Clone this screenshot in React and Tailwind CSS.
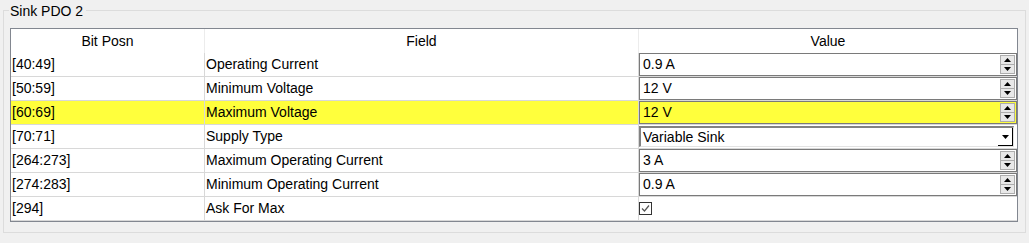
const rows = [
  { bits: '[40:49]', field: 'Operating Current', value: '0.9 A', kind: 'spin' },
  { bits: '[50:59]', field: 'Minimum Voltage', value: '12 V', kind: 'spin' },
  { bits: '[60:69]', field: 'Maximum Voltage', value: '12 V', kind: 'spin', highlight: true },
  { bits: '[70:71]', field: 'Supply Type', value: 'Variable Sink', kind: 'combo' },
  { bits: '[264:273]', field: 'Maximum Operating Current', value: '3 A', kind: 'spin' },
  { bits: '[274:283]', field: 'Minimum Operating Current', value: '0.9 A', kind: 'spin' },
  { bits: '[294]', field: 'Ask For Max', value: true, kind: 'check' }
]

const SpinBox = ({ value, highlight }) => (
  <div className={`relative flex items-center h-full border border-[#7a7a7a] pl-[3px] ${highlight ? 'bg-[#ffff3c]' : 'bg-white'}`}>
    <span>{value}</span>
    {/* up / down buttons */}
    <div className="absolute right-[1px] top-[1px] bottom-[1px] w-[15px] flex flex-col">
      <div className="flex-1 flex items-center justify-center bg-[#e8e8e8] border border-[#adadad]">
        <svg width="7" height="4" viewBox="0 0 7 4"><path d="M3.5 0 L7 4 L0 4 Z" fill="#000" /></svg>
      </div>
      <div className="flex-1 flex items-center justify-center bg-[#e8e8e8] border border-t-0 border-[#adadad]">
        <svg width="7" height="4" viewBox="0 0 7 4"><path d="M0 0 L7 0 L3.5 4 Z" fill="#000" /></svg>
      </div>
    </div>
  </div>
)

const ComboBox = ({ value }) => (
  <div className="relative flex items-center h-[21px] mt-[1px] mr-[3px] bg-white border-t-2 border-l-2 border-t-[#828282] border-l-[#828282] border-b border-r border-b-[#e3e3e3] border-r-[#e3e3e3] pl-[2px]">
    <span>{value}</span>
    <div className="absolute right-0 top-0 bottom-0 w-[15px] flex items-center justify-center border-r border-b border-black bg-white">
      <svg width="7" height="4" viewBox="0 0 7 4"><path d="M0 0 L7 0 L3.5 4 Z" fill="#000" /></svg>
    </div>
  </div>
)

const CheckBox = ({ checked }) => (
  <div className="w-[13px] h-[13px] border border-[#333] bg-white flex items-center justify-center">
    {checked && (
      <svg width="11" height="11" viewBox="0 0 11 11">
        <path d="M2 5.5 L4.5 8 L9 2.5" fill="none" stroke="#555" strokeWidth="1.2" />
      </svg>
    )}
  </div>
)

export default function App() {
  return (
    <div
      className="w-[1029px] h-[243px] bg-[#f0f0f0] pt-[10px] pl-[3px] text-[14px] text-black overflow-hidden"
      style={{ fontFamily: '"Liberation Sans", Arial, sans-serif' }}
    >
      {/* Group box */}
      <div className="relative w-[1023px] h-[223px] border border-[#dcdcdc] pt-[17px] pl-[6px]">
        <span className="absolute left-[5px] top-[-8px] leading-[16px] bg-[#f0f0f0] pl-[1px] pr-[3px]">Sink PDO 2</span>

        {/* Grid */}
        <div className="w-[1008px] border border-[#828790] bg-white">
          <div className="grid grid-cols-[194px_434px_378px] h-[24px] leading-[24px]">
            <div className="text-center border-r border-[#ececec]">Bit Posn</div>
            <div className="text-center border-r border-[#ececec]">Field</div>
            <div className="text-center">Value</div>
          </div>
          {rows.map((row, i) => (
            <div
              key={i}
              className={`grid grid-cols-[194px_434px_378px] h-[24px] ${row.highlight ? 'bg-[#ffff3c]' : ''}`}
            >
              <div className="flex items-center border-r border-b border-[#d8d8d8] pl-[1px] h-[24px]">{row.bits}</div>
              <div className="flex items-center border-r border-b border-[#d8d8d8] pl-[1px] h-[24px]">{row.field}</div>
              <div className="border-b border-[#d8d8d8] h-[24px]">
                {row.kind === 'spin' && <SpinBox value={row.value} highlight={row.highlight} />}
                {row.kind === 'combo' && <ComboBox value={row.value} />}
                {row.kind === 'check' && (
                  <div className="flex items-center h-full">
                    <CheckBox checked={row.value} />
                  </div>
                )}
              </div>
            </div>
          ))}
        </div>
      </div>
    </div>
  )
}
